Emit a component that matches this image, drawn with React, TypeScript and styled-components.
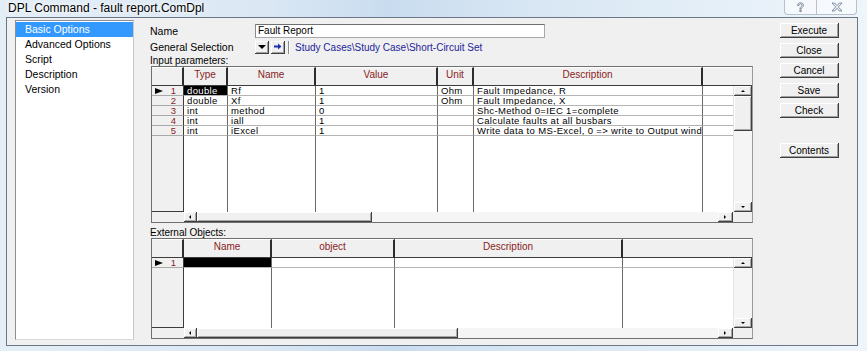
import React from 'react';
import styled, { createGlobalStyle } from 'styled-components';

const GlobalStyle = createGlobalStyle`
  html, body {
    margin: 0;
    padding: 0;
    background: #f2f7fb;
  }
  body {
    font-family: 'Liberation Sans', Arial, sans-serif;
  }
`;

type Dir = 'up' | 'down' | 'left' | 'right';

interface GridColumn {
  title: string;
  width: number;
}

interface GridProps {
  height: number;
  columns: GridColumn[];
  lastWidth: number;
  rows: string[][];
  selected: [number, number];
  vThumb?: number;
  hThumb: number;
}

const Window = styled.div`
  width: 867px;
  height: 351px;
  overflow: hidden;
  box-sizing: border-box;
  padding: 0 9px 5px 6px;
  display: flex;
  flex-direction: column;
  background:
    linear-gradient(90deg, #e4eef7 0%, #dbe8f4 30%, #c9dcef 45%, #d7e6f3 60%, #e6f0f8 85%, #eef5fb 100%);
`;

const TitleBar = styled.div`
  height: 17px;
  flex: none;
  display: flex;
  justify-content: space-between;
  align-items: flex-start;
`;

const Title = styled.div`
  padding: 2px 0 0 2px;
  font-size: 12px;
  line-height: 13px;
  color: #000;
  text-shadow: 0 0 6px #fff, 0 0 3px #fff;
`;

const Captions = styled.div`
  display: flex;
  margin-right: 1px;
  border: 1px solid rgba(90, 110, 135, 0.4);
  border-top: none;
  border-radius: 0 0 4px 4px;
  overflow: hidden;
  background: rgba(255, 255, 255, 0.5);
`;

const CaptionButton = styled.div<{ $w: number }>`
  width: ${p => p.$w}px;
  height: 14px;
  display: flex;
  align-items: center;
  justify-content: center;
  & + & {
    border-left: 1px solid rgba(90, 110, 135, 0.4);
  }
`;

const Client = styled.div`
  flex: 1;
  display: flex;
  box-sizing: border-box;
  border: 1px solid #6b7786;
  background: #f0f0f0;
  padding: 2px 0 5px 8px;
`;

const Sidebar = styled.div`
  width: 119px;
  flex: none;
  box-sizing: border-box;
  border: 1px solid #8a8f96;
  border-right-color: #c8c8c8;
  border-bottom-color: #d8d8d8;
  background: #fff;
  padding-top: 1px;
`;

const NavItem = styled.div<{ $active?: boolean }>`
  height: 15px;
  line-height: 15px;
  padding-left: 9px;
  font-size: 10.5px;
  background: ${p => (p.$active ? '#3399ff' : 'transparent')};
  color: ${p => (p.$active ? '#fff' : '#000')};
`;

const Main = styled.div`
  width: 603px;
  flex: none;
  margin-left: 16px;
  padding-top: 4px;
  display: flex;
  flex-direction: column;
`;

const FieldRow = styled.div<{ $gap?: number }>`
  display: flex;
  align-items: center;
  height: 14px;
  margin-top: ${p => p.$gap ?? 0}px;
  font-size: 10.5px;
`;

const FieldLabel = styled.div`
  width: 105px;
  flex: none;
`;

const TextInput = styled.div`
  width: 290px;
  height: 14px;
  box-sizing: border-box;
  border: 1px solid #a8a8a8;
  border-top-color: #707070;
  border-left-color: #8a8a8a;
  background: #fff;
  font-size: 10px;
  line-height: 12px;
  padding-left: 2px;
`;

const ToolButton = styled.div`
  width: 14px;
  height: 13px;
  box-sizing: border-box;
  margin-right: 2px;
  background: #f0f0f0;
  border-right: 1px solid #404040;
  border-bottom: 1px solid #404040;
  box-shadow: inset 1px 1px 0 #fff, inset -1px -1px 0 #a0a0a0;
  display: flex;
  align-items: center;
  justify-content: center;
`;

const Separator = styled.div`
  width: 1px;
  height: 13px;
  background: #8a8a8a;
  border-right: 1px solid #fff;
  margin: 0 5px 0 1px;
`;

const PathText = styled.div`
  color: #24249a;
  font-size: 10px;
`;

const SectionLabel = styled.div<{ $gap: number }>`
  height: 10px;
  line-height: 10px;
  margin-top: ${p => p.$gap}px;
  font-size: 10px;
  color: #000;
`;

const GridFrame = styled.div<{ $h: number }>`
  height: ${p => p.$h}px;
  flex: none;
  margin-left: 1px;
  box-sizing: border-box;
  border: 1px solid #6f6f6f;
  border-right-color: #9a9a9a;
  background: #f0f0f0;
  display: flex;
  flex-direction: column;
`;

const GridBody = styled.div`
  flex: 1;
  display: flex;
  min-height: 0;
`;

const Column = styled.div<{ $w: number }>`
  width: ${p => p.$w}px;
  flex: none;
  display: flex;
  flex-direction: column;
`;

const HeadCell = styled.div<{ $last?: boolean }>`
  height: 19px;
  flex: none;
  box-sizing: border-box;
  border-top: 1px solid #fff;
  border-bottom: 1px solid #3c3c3c;
  border-right: ${p => (p.$last ? 'none' : '2px solid #2c2c2c')};
  background: #f0f0f0;
  color: #8a1c1c;
  font-size: 10px;
  line-height: 14px;
  text-align: center;
`;

const Cell = styled.div<{ $sel?: boolean; $edge?: boolean }>`
  height: 10px;
  flex: none;
  box-sizing: border-box;
  border-bottom: 1px solid #b4b4b4;
  border-right: ${p => (p.$edge ? 'none' : '1px solid #6a6a6a')};
  background: ${p => (p.$sel ? '#000' : '#fff')};
  color: ${p => (p.$sel ? '#fff' : '#000')};
  font-size: 9.5px;
  letter-spacing: 0.35px;
  line-height: 9px;
  padding-left: 3px;
  white-space: nowrap;
  overflow: hidden;
`;

const Filler = styled.div<{ $edge?: boolean }>`
  flex: 1;
  background: #fff;
  border-right: ${p => (p.$edge ? 'none' : '1px solid #6a6a6a')};
`;

const RowHead = styled.div`
  height: 10px;
  flex: none;
  box-sizing: border-box;
  border-bottom: 1px solid #a8a8a8;
  border-right: 1px solid #3c3c3c;
  background: #f0f0f0;
  color: #8a1c1c;
  font-size: 9.5px;
  line-height: 9px;
  display: flex;
  align-items: center;
  padding: 0 7px 0 3px;
`;

const Pointer = styled.span`
  width: 0;
  height: 0;
  border-left: 8px solid #000;
  border-top: 3.5px solid transparent;
  border-bottom: 3.5px solid transparent;
`;

const RowNumber = styled.span`
  margin-left: auto;
`;

const RowHeadFiller = styled.div`
  flex: 1;
  background: #f0f0f0;
  border-right: 1px solid #3c3c3c;
  border-bottom: 1px solid #3c3c3c;
`;

const LastBody = styled.div`
  flex: 1;
  display: flex;
  min-height: 0;
`;

const CellStack = styled.div`
  flex: 1;
  display: flex;
  flex-direction: column;
`;

const VScroll = styled.div`
  width: 18px;
  flex: none;
  display: flex;
  flex-direction: column;
  background: #f5f5f5;
  border-left: 1px solid #e4e4e4;
`;

const HScrollRow = styled.div`
  height: 10px;
  flex: none;
  display: flex;
`;

const ScrollCorner = styled.div<{ $w: number }>`
  width: ${p => p.$w}px;
  flex: none;
`;

const HScroll = styled.div<{ $w: number }>`
  width: ${p => p.$w}px;
  flex: none;
  display: flex;
  background: #f5f5f5;
`;

const ScrollBtn = styled.div<{ $w?: number; $h?: number }>`
  width: ${p => (p.$w ? `${p.$w}px` : 'auto')};
  height: ${p => (p.$h ? `${p.$h}px` : 'auto')};
  flex: none;
  box-sizing: border-box;
  background: #f0f0f0;
  border-right: 1px solid #404040;
  border-bottom: 1px solid #404040;
  box-shadow: inset 1px 1px 0 #fff, inset -1px -1px 0 #a8a8a8;
  display: flex;
  align-items: center;
  justify-content: center;
`;

const Track = styled.div`
  flex: 1;
`;

const Tri = styled.span<{ $dir: Dir; $s?: number }>`
  width: 0;
  height: 0;
  ${({ $dir, $s = 2 }) => {
    const solid = `${$s}px solid #000`;
    const clear = `${$s}px solid transparent`;
    if ($dir === 'up') return `border-bottom: ${solid}; border-left: ${clear}; border-right: ${clear};`;
    if ($dir === 'down') return `border-top: ${solid}; border-left: ${clear}; border-right: ${clear};`;
    if ($dir === 'left') return `border-right: ${solid}; border-top: ${clear}; border-bottom: ${clear};`;
    return `border-left: ${solid}; border-top: ${clear}; border-bottom: ${clear};`;
  }}
`;

const ButtonColumn = styled.div`
  width: 59px;
  flex: none;
  margin-left: 27px;
  padding-top: 1px;
  display: flex;
  flex-direction: column;
`;

const ActionButton = styled.button<{ $gap?: number }>`
  width: 59px;
  height: 15px;
  margin-top: ${p => p.$gap ?? 5}px;
  padding: 0;
  font: 10px 'Liberation Sans', Arial, sans-serif;
  color: #000;
  background: #f0f0f0;
  border: none;
  border-right: 1px solid #3f3f3f;
  border-bottom: 1px solid #3f3f3f;
  box-shadow: inset 1px 1px 0 #fff, inset -1px -1px 0 #a0a0a0;
`;

function DataGrid ({ height, columns, lastWidth, rows, selected, vThumb, hThumb }: GridProps): React.ReactElement {
  const rowHeadWidth = 32;
  const hWidth = columns.reduce((sum, c) => sum + c.width, 0) + lastWidth - 19;

  return (
    <GridFrame $h={height}>
      <GridBody>
        <Column $w={rowHeadWidth}>
          <HeadCell />
          {rows.map((_, i) => (
            <RowHead key={i}>
              {i === 0 && <Pointer />}
              <RowNumber>{i + 1}</RowNumber>
            </RowHead>
          ))}
          <RowHeadFiller />
        </Column>
        {columns.map((col, ci) => (
          <Column key={col.title} $w={col.width}>
            <HeadCell>{col.title}</HeadCell>
            {rows.map((row, ri) => (
              <Cell key={ri} $sel={selected[0] === ri && selected[1] === ci}>{row[ci]}</Cell>
            ))}
            <Filler />
          </Column>
        ))}
        <Column $w={lastWidth}>
          <HeadCell $last />
          <LastBody>
            <CellStack>
              {rows.map((_, ri) => <Cell key={ri} $edge />)}
              <Filler $edge />
            </CellStack>
            <VScroll>
              <ScrollBtn $h={10}><Tri $dir='up' /></ScrollBtn>
              {vThumb ? <ScrollBtn $h={vThumb} /> : null}
              <Track />
              <ScrollBtn $h={10}><Tri $dir='down' /></ScrollBtn>
            </VScroll>
          </LastBody>
        </Column>
      </GridBody>
      <HScrollRow>
        <ScrollCorner $w={rowHeadWidth} />
        <HScroll $w={hWidth}>
          <ScrollBtn $w={13}><Tri $dir='left' /></ScrollBtn>
          <ScrollBtn $w={hThumb} />
          <Track />
          <ScrollBtn $w={15}><Tri $dir='right' /></ScrollBtn>
        </HScroll>
      </HScrollRow>
    </GridFrame>
  );
}

const inputColumns: GridColumn[] = [
  { title: 'Type', width: 44 },
  { title: 'Name', width: 88 },
  { title: 'Value', width: 122 },
  { title: 'Unit', width: 36 },
  { title: 'Description', width: 229 }
];

const inputRows: string[][] = [
  ['double', 'Rf', '1', 'Ohm', 'Fault Impedance, R'],
  ['double', 'Xf', '1', 'Ohm', 'Fault Impedance, X'],
  ['int', 'method', '0', '', 'Shc-Method 0=IEC 1=complete'],
  ['int', 'iall', '1', '', 'Calculate faults at all busbars'],
  ['int', 'iExcel', '1', '', 'Write data to MS-Excel, 0 => write to Output window']
];

const objectColumns: GridColumn[] = [
  { title: 'Name', width: 88 },
  { title: 'object', width: 123 },
  { title: 'Description', width: 228 }
];

const navItems = ['Basic Options', 'Advanced Options', 'Script', 'Description', 'Version'];

export default function App (): React.ReactElement {
  return (
    <>
      <GlobalStyle />
      <Window>
        <TitleBar>
          <Title>DPL Command - fault report.ComDpl</Title>
          <Captions>
            <CaptionButton $w={31}>
              <svg width='9' height='11' viewBox='0 0 9 11'>
                <path d='M1.5 3.5 C1.5 1.5 3 0.8 4.5 0.8 C6.2 0.8 7.5 1.8 7.5 3.3 C7.5 5 5.5 5.3 5.2 7 L3.8 7 C3.8 4.8 6 4.6 6 3.3 C6 2.5 5.3 2 4.5 2 C3.6 2 3 2.6 3 3.5 Z M3.8 8 H5.2 V9.6 H3.8 Z' fill='#e9eef4' stroke='#5b6b80' strokeWidth='0.7' />
              </svg>
            </CaptionButton>
            <CaptionButton $w={39}>
              <svg width='12' height='10' viewBox='0 0 12 10'>
                <path d='M1 1 H3.6 L6 3.6 L8.4 1 H11 L7.3 5 L11 9 H8.4 L6 6.4 L3.6 9 H1 L4.7 5 Z' fill='#e9eef4' stroke='#5b6b80' strokeWidth='0.7' />
              </svg>
            </CaptionButton>
          </Captions>
        </TitleBar>
        <Client>
          <Sidebar>
            {navItems.map((item, i) => (
              <NavItem key={item} $active={i === 0}>{item}</NavItem>
            ))}
          </Sidebar>
          <Main>
            <FieldRow>
              <FieldLabel>Name</FieldLabel>
              <TextInput>Fault Report</TextInput>
            </FieldRow>
            <FieldRow $gap={2}>
              <FieldLabel>General Selection</FieldLabel>
              <ToolButton><Tri $dir='down' $s={4} /></ToolButton>
              <ToolButton>
                <svg width='8' height='7' viewBox='0 0 8 7'>
                  <path d='M0 2.5 H4 V0.5 L7.5 3.5 L4 6.5 V4.5 H0 Z' fill='#1b2fb0' />
                </svg>
              </ToolButton>
              <Separator />
              <PathText>Study Cases\Study Case\Short-Circuit Set</PathText>
            </FieldRow>
            <SectionLabel $gap={2}>Input parameters:</SectionLabel>
            <DataGrid
              height={157}
              columns={inputColumns}
              lastWidth={49}
              rows={inputRows}
              selected={[0, 0]}
              vThumb={35}
              hThumb={175}
            />
            <SectionLabel $gap={5}>External Objects:</SectionLabel>
            <DataGrid
              height={101}
              columns={objectColumns}
              lastWidth={129}
              rows={[['', '', '']]}
              selected={[0, 0]}
              hThumb={261}
            />
          </Main>
          <ButtonColumn>
            <ActionButton $gap={2}>Execute</ActionButton>
            <ActionButton>Close</ActionButton>
            <ActionButton>Cancel</ActionButton>
            <ActionButton>Save</ActionButton>
            <ActionButton>Check</ActionButton>
            <ActionButton $gap={25}>Contents</ActionButton>
          </ButtonColumn>
        </Client>
      </Window>
    </>
  );
}
